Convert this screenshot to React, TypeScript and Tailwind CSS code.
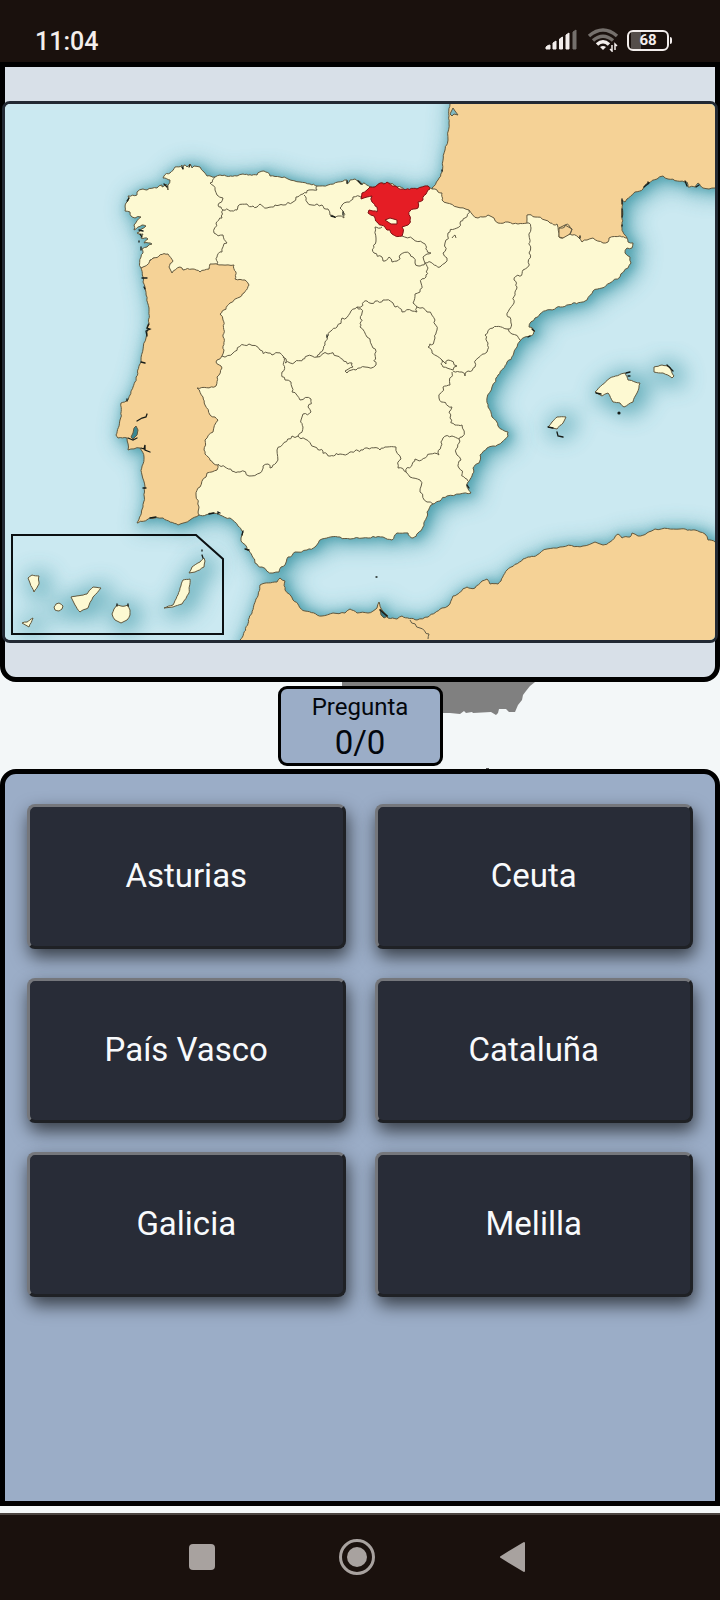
type Point = [number, number];

const SPAIN =
  "141,268 141,257 143,253 142,249 147,247 152,244 144,243 148,239 141,238 143,234 137,233 146,226 142,225 134,230 134,225 141,217 135,218 132,217 130,212 125,211 126,203 129,198 128,196 137,195 137,192 143,189 147,190 157,188 162,185 162,187 166,184 168,190 168,185 170,180 163,178 164,176 170,173 175,167 182,165 183,169 184,165 187,167 190,164 192,168 194,166 200,167 204,172 207,176 215,177 220,175 237,176 243,174 257,175 264,171 270,176 280,177 288,179 300,182 310,184 317,186 328,185 338,182 347,180 347,184 350,180 355,179 359,181 362,185 363,183 370,187 375,187 382,183 388,183 397,187 405,190 417,189 425,187 428,186 432,189 435,189 438,192 442,193 442,200 447,203 457,207 469,210 478,218 483,217 488,215 494,218 498,223 508,222 518,224 527,223 527,215 535,217 545,220 550,223 557,224 559,237 563,238 570,234 578,237 582,242 587,240 593,238 603,243 608,242 609,238 620,236 627,238 628,242 633,243 632,248 627,248 625,253 630,257 631,263 628,268 620,277 610,283 593,291 587,300 573,303 540,314 535,318 529,327 535,331 530,336 525,337 520,341 517,347 507,362 498,375 492,387 487,398 488,407 492,417 498,426 508,432 508,436 502,442 493,446 487,448 480,455 479,463 473,468 472,476 468,482 467,487 471,493 460,494 447,496 440,501 433,504 427,512 423,527 418,533 413,538 408,533 397,533 392,540 383,537 363,538 350,539 340,537 322,539 315,547 307,550 295,552 288,557 285,565 281,567 279,572 273,573 262,567 255,563 247,550 241,541 241,538 243,532 238,526 230,518 220,515 213,513 199,515 199,507 196,495 200,487 206,477 207,473 217,470 218,465 213,463 204,450 205,440 213,432 218,420 215,417 210,415 205,405 203,397 197,388 216,386 217,377 222,368 216,362 217,360 222,356 224,350 223,320 220,314 230,303 240,297 249,285 245,280 235,279 234,265 210,264 209,269 200,272 192,269 183,270 180,267 172,273 169,267 173,261 168,254 153,258 143,267";

const PORTUGAL =
  "141,268 143,282 145,287 149,308 149,323 146,338 141,360 133,387 128,400 121,403 120,420 116,435 118,438 127,438 128,450 140,448 144,457 142,475 145,487 143,507 137,523 150,518 163,518 178,525 190,520 199,515 225,480 235,400 235,320 260,285 240,255 170,248 153,258";

const FRANCE =
  "450,90 450,104 449,123 445,150 442,172 438,180 432,188 445,215 520,235 560,245 610,250 627,238 623,232 622,217 622,200 625,202 635,192 643,189 648,183 657,179 663,176 668,179 687,182 688,187 695,187 698,183 703,188 715,188 730,188 730,90";

const AFRICA =
  "236,652 240,640 252,613 260,585 277,582 280,578 285,581 285,590 293,600 305,611 322,616 333,613 345,613 350,609 357,613 368,613 377,608 379,602 382,610 388,618 397,619 402,616 417,620 428,617 442,608 448,606 453,596 467,587 475,588 482,581 487,579 490,584 498,584 507,570 523,559 537,555 547,549 560,547 583,546 595,542 603,545 610,542 618,534 622,538 630,537 632,533 638,536 647,533 655,529 680,529 695,530 705,534 708,540 715,542 730,543 730,652";

const ISLANDS = [
  "595,392 610,378 625,373 628,380 635,382 640,383 637,393 633,402 624,407 620,403 613,402 608,393 602,396",
  "654,367 662,365 670,367 674,376 672,378 663,373 654,372",
  "548,427 552,422 557,417 566,417 563,423 557,429",
  "28,578 32,575 39,576 39,584 34,592 30,583",
  "22,623 27,622 33,618 29,627",
  "54,607 56,604 59,603 63,606 62,609 59,611 55,610",
  "71,597 87,594 93,587 101,588 93,597 88,608 80,612 75,605",
  "117,605 121,606 125,606 128,605 130,610 130,615 127,620 121,623 115,620 112,614 114,609",
  "164,608 173,605 180,588 183,580 190,579 189,593 182,604 173,607",
  "189,573 192,567 200,562 204,558 205,561 204,567 195,572",
];

const BORDERS = [
  "215,177 210,183 215,190 217,195 223,198 218,205 223,210 222,218 216,223 214,233 223,235 227,243 222,252 217,257 217,264",
  "223,210 230,211 237,210 238,206 247,204 253,206 260,204 267,208 275,205 283,205 293,202 296,197 303,194 309,190 317,190 317,186",
  "304,195 307,202 312,205 322,205 328,209 330,215 335,218 338,216 344,218 343,211 340,208 342,205 347,202 353,197 362,198",
  "382,227 375,227 376,238 374,253 382,257 383,261 389,257 392,262 397,261 400,255 410,254 413,257 415,263 422,265 425,263 423,257 427,254 431,253 423,243 413,239 402,236",
  "425,263 440,267 445,263 447,258 443,253 445,243 448,233 460,223 465,218 469,210",
  "425,263 426,277 421,283 420,292 415,294 413,303 417,307 417,312 412,311 402,312 395,307 393,303 383,300 367,301 357,307 342,318 337,327 327,337 325,345 317,357 307,356 295,362 285,363 283,356 268,353 260,350 249,344 233,353 222,356",
  "357,307 362,313 360,327 367,337 373,348 376,365 365,367 347,373 345,371 353,367 352,363 337,356 328,354 317,357",
  "417,307 427,312 435,320 437,330 435,338 428,347 432,353 442,360 443,367 453,370 457,366 448,360 446,364 442,360",
  "453,371 462,372 465,376 468,371 475,367 478,358 487,352 488,343 485,335 493,328 508,329",
  "527,223 531,228 529,253 523,270 514,280 517,287 514,303 509,310 511,323 508,329 512,334 520,340",
  "452,372 450,385 443,387 439,398 452,407 450,418 455,425 462,425 462,437 459,439 452,436 443,438 439,455 430,454 415,459 406,472",
  "459,439 457,455 461,460 459,468 468,481",
  "406,472 410,477 420,480 420,492 427,502 433,504",
  "406,472 398,468 401,459 396,447 387,447 380,450 363,450 350,452 340,454 327,454 315,447 305,439 298,436",
  "283,357 282,372 285,380 291,382 292,392 300,400 311,399 308,407 311,412 303,414 301,420 303,427 298,436 292,436 277,450 276,463 270,468 268,464 263,466 260,473 249,476 240,472 225,467 218,464",
  "452,238 455,235 456,238",
  "559,228 565,225 572,229 570,234",
  "410,620 420,628 429,634 428,639",
];

const BASQUE =
  "370,187 375,187 380,183 387,182 395,186 402,189 417,189 428,186 430,189 427,192 423,200 418,202 418,208 410,211 408,225 405,226 402,227 403,233 402,236 392,234 390,230 387,230 385,227 378,223 375,218 374,216 368,213 369,210 377,212 377,207 372,202 372,196 367,197 361,199 362,193 367,190";

const INLETS =
  "M182 167l1 2M190 165l-1 2M164 184l3 3M129 198l-2 3M139 230l4 1M140 234l2 3M139 241v1M141 247v3M142 278l5 0M144 287l1 2M149 324l-2 4 3 1-4 2 1 5M141 362l4 1M127 401v-2M137 421l5-3 4-1 1-3M128 438l5 2 4-2M141 448l3 1 1-4 0 5 5 2M143 488l3 0M150 518l6-1M209 514l5-1M218 514v-2l2 1M245 549l4 1M243 531l-1 4M347 181v2M358 181l3 3M331 216l4 1M343 212v3M327 335v2M442 170v1M622 199v5M622 209v8M622 225v1M644 187l5-4M648 182v2M685 181l2 5M696 187l3-2M532 329l2 2M528 337l2-1M580 236v2M667 365l6 6M626 373l4-1M628 376l2 0M596 393l5 1M548 427l5 1M557 432l1 4 5 1M202 550v1M202 555l1 3M117 606v-2M128 606v-2M380 610l7 6M467 485l2 3M376 577h1";

function parse(points: string): Point[] {
  return points.split(" ").map((pair) => pair.split(",").map(Number) as Point);
}

/* Splits a segment into a wavering line; both directions give the same line. */
function waver(a: Point, b: Point, amount: number): Point[] {
  const length = Math.hypot(b[0] - a[0], b[1] - a[1]);
  if (length < 3.5) return [b];
  const forward = a[0] < b[0] || (a[0] === b[0] && a[1] < b[1]);
  const seed = Math.sin((a[0] + b[0]) * 12.9898 + (a[1] + b[1]) * 78.233) * 43758.5453;
  const noise = (seed - Math.floor(seed) - 0.5) * 2 * amount * Math.min(1, length / 8);
  const side = forward ? 1 : -1;
  const middle: Point = [
    (a[0] + b[0]) / 2 - ((b[1] - a[1]) / length) * noise * side,
    (a[1] + b[1]) / 2 + ((b[0] - a[0]) / length) * noise * side,
  ];
  return [...waver(a, middle, amount), ...waver(middle, b, amount)];
}

function toPath(points: string, closed: boolean, amount = 2.4) {
  const list = parse(points);
  const out: Point[] = [list[0]];
  for (let i = 1; i < list.length; i++) out.push(...waver(list[i - 1], list[i], amount));
  return "M" + out.map((p) => p[0].toFixed(1) + " " + p[1].toFixed(1)).join("L") + (closed ? "Z" : "");
}

const land = [PORTUGAL, FRANCE, AFRICA].map((p) => toPath(p, true, 1));
const spain = toPath(SPAIN, true, 1.4);
const islands = ISLANDS.map((p) => toPath(p, true, 0.6));
const mainland = [...land, spain].join("");

function SpainMap() {
  return (
    <svg viewBox="5 104 710 536" role="img" aria-label="Mapa de España" className="block w-full">
      <defs>
        <filter id="wide" x="-10%" y="-10%" width="120%" height="120%">
          <feGaussianBlur stdDeviation="11" />
        </filter>
        <filter id="near" x="-10%" y="-10%" width="120%" height="120%">
          <feGaussianBlur stdDeviation="5" />
        </filter>
      </defs>
      <rect x="0" y="100" width="720" height="545" fill="#cbe9f1" />
      <g fill="#3f98a6" stroke="#3f98a6" strokeLinejoin="round">
        <path d={mainland} strokeWidth="8" opacity="0.7" filter="url(#wide)" transform="translate(5 3)" />
        <path d={mainland} strokeWidth="3" opacity="0.6" filter="url(#near)" transform="translate(3 1)" />
        <path d={islands.join("")} strokeWidth="12" opacity="0.75" filter="url(#wide)" transform="translate(5 3)" />
      </g>
      <g stroke="#62583e" strokeWidth="1" strokeLinejoin="round">
        {land.map((d) => (
          <path key={d} d={d} fill="#f5d296" />
        ))}
        <path d={spain} fill="#fdf9d2" />
        {islands.map((d) => (
          <path key={d} d={d} fill="#fdf9d2" />
        ))}
        <path d="M559 228l6-3 7 4-2 5-7 4-4-1z" fill="#f5d296" />
        <g fill="none" stroke="#625c46">
          {BORDERS.map((border) => (
            <path key={border} d={toPath(border, false)} />
          ))}
        </g>
        <path d="M136 426l2 4-1 5-4 4-2-2 2-4 1-5z" fill="#3a8793" />
        <path d="M450 114l3-6 2 3 3 4-4-1-2 2z" fill="#7fb9c3" />
        <path d="M380 609l8 7-4 2-3-3z" fill="#397782" />
        <path d={toPath(BASQUE, true, 1.6)} fill="#e51d25" stroke="#7d1214" />
        <path d="M385 220l5-2 7 2 0 4-6 0z" fill="#fdf9d2" stroke="#7d1214" />
      </g>
      <path d={INLETS} fill="none" stroke="#171c18" strokeWidth="1.3" strokeLinecap="round" />
      <circle cx="619" cy="413" r="1.6" fill="#171c18" />
      <path d="M12 535H196L223 559V634H12Z" fill="none" stroke="#0b1012" strokeWidth="2" />
    </svg>
  );
}

function StatusBar() {
  return (
    <header className="flex h-[62px] shrink-0 items-end justify-between bg-[#1a110d] pr-12 pb-1 pl-[35px] text-[#f3eeec]">
      <time className="text-[25px] leading-8 font-medium">11:04</time>
      <div className="flex h-9 items-center gap-2">
        <svg width="34" height="22" viewBox="0 0 34 22" fill="currentColor" aria-label="Señal" role="img">
          <path d="M1 20v-2q2-2 4-2v4zM8 20v-6l3-2v8zM14.500 20V10l3-2v12zM21 20V6L24 4v16z" stroke="currentColor" strokeLinejoin="round" />
          <path d="M28 20V3l3-2v19z" stroke="#75706c" strokeLinejoin="round" fill="#75706c" />
        </svg>
        <svg width="32" height="24" viewBox="0 0 32 24" fill="none" aria-label="Wifi" role="img">
          <path d="M2 8Q16 -4 30 8" stroke="#75706c" strokeWidth="3.500" />
          <path d="M6 12.500Q16 4 26 12.500" stroke="#75706c" strokeWidth="3.500" />
          <path d="M10 16.500Q16 11 22 16.500" stroke="currentColor" strokeWidth="3.500" />
          <path d="M16 22l-3-3q3-2 6 0z" fill="currentColor" />
          <path d="M25 17v6l-2-2M28 22v-6l2 2" stroke="currentColor" strokeWidth="1.500" />
        </svg>
        <div className="flex items-center gap-px" role="img" aria-label="Batería">
          <span className="flex h-[21px] w-[42px] items-center justify-center rounded-[6px] border-2 border-current bg-[linear-gradient(to_right,transparent_2px,#554e4a_2px,#554e4a_12px,transparent_12px)] text-[15px] leading-4 font-bold">
            68
          </span>
          <span className="h-[7px] w-[2px] rounded-r bg-current" />
        </div>
      </div>
    </header>
  );
}

const answers = ["Asturias", "Ceuta", "País Vasco", "Cataluña", "Galicia", "Melilla"];

export default function App() {
  return (
    <div className="flex min-h-screen flex-col bg-[#f3f7f8] font-[Roboto,sans-serif]">
      <StatusBar />

      <section className="rounded-b-[16px] border-[5px] border-black bg-[#d8e0e8] py-[34px]">
        <div className="-mx-[3px] overflow-hidden rounded-[8px] border-[3px] border-[#222933]">
          <SpainMap />
        </div>
      </section>

      <div className="relative flex h-[87px] shrink-0 items-start justify-center pt-1">
        <svg viewBox="0 0 720 87" preserveAspectRatio="xMidYMin slice" className="absolute inset-0 h-full w-full" aria-hidden="true">
          <path
            d="M342 0H535L530 4 526 9 523 13 522 18 518 23 515 30 509 30 506 27 499 27 498 31 496 33 491 30 473 31 472 30 466 31 464 29 460 32 450 31 442 31H342Z"
            fill="#808080"
          />
          <path d="M486 86h3v1h-3z" fill="#555" />
        </svg>
        <div className="relative flex h-20 w-[165px] flex-col items-center rounded-[9px] border-[3px] border-black bg-[#9badc7] pt-0.5 text-[#03070d]">
          <span className="text-2xl leading-8">Pregunta</span>
          <span className="text-[33px] leading-10">0/0</span>
        </div>
      </div>

      <main className="mb-[7px] grow rounded-t-[16px] border-[5px] border-black bg-[#9badc7] px-[22px] pt-[30px] pb-8">
        <div className="grid grid-cols-2 gap-x-[29px] gap-y-[29px]">
          {answers.map((answer) => (
            <button
              key={answer}
              type="button"
              className="h-[145px] rounded-[8px] border-[3px] border-t-[#75777c] border-r-[#1f2125] border-b-[#1f2125] border-l-[#75777c] bg-[#282c37] pb-0.5 text-[33px] text-[#f8fafc] shadow-[2px_8px_18px_rgba(0,0,0,0.65)]"
            >
              {answer}
            </button>
          ))}
        </div>
      </main>

      <nav className="flex h-[87px] shrink-0 items-center justify-center gap-[119px] border-t-2 border-[#4c4541] bg-[#1a110d] pr-1.5 pb-0.5 text-[#a8a29f]">
        <button type="button" aria-label="Recientes">
          <svg width="36" height="38" viewBox="0 0 36 38" fill="currentColor">
            <rect x="5" y="6" width="26" height="26" rx="4" />
          </svg>
        </button>
        <button type="button" aria-label="Inicio">
          <svg width="36" height="38" viewBox="0 0 36 38" fill="currentColor">
            <circle cx="18" cy="19" r="16.500" fill="none" stroke="currentColor" strokeWidth="3" />
            <circle cx="18" cy="19" r="10" />
          </svg>
        </button>
        <button type="button" aria-label="Atrás">
          <svg width="36" height="38" viewBox="0 0 36 38" fill="currentColor" stroke="currentColor" strokeWidth="2" strokeLinejoin="round">
            <path d="M7 19L30 5V33Z" />
          </svg>
        </button>
      </nav>
    </div>
  );
}
